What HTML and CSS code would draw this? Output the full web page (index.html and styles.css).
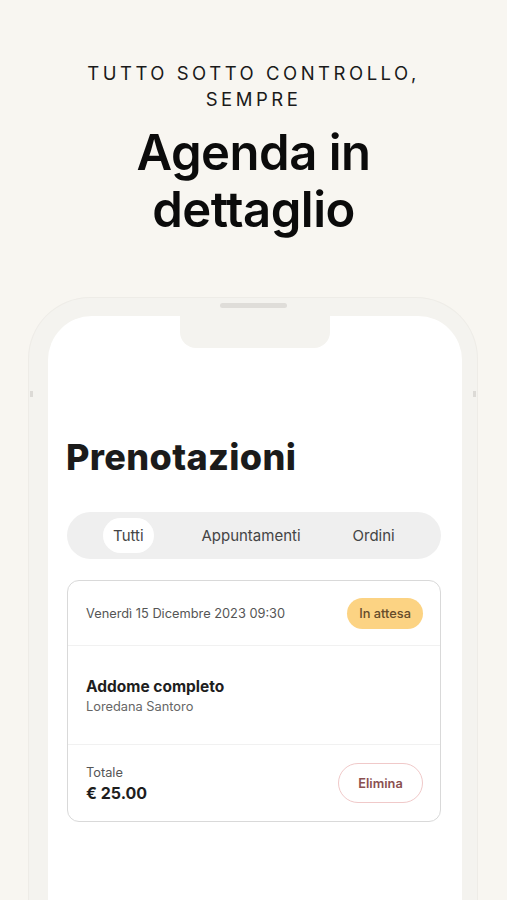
FILE: index.html
```html
<!doctype html>
<html lang="it">
<head>
  <meta charset="UTF-8">
  <meta name="viewport" content="width=device-width, initial-scale=1.0">
  <title>Agenda in dettaglio</title>
  <link rel="stylesheet" href="styles.css">
</head>
<body>
  <div class="intro">
    <p class="kicker">Tutto sotto controllo,<br>sempre</p>
    <h1 class="headline">Agenda in<br>dettaglio</h1>
  </div>

  <div class="phone">
    <span class="speaker"></span>
    <span class="notch"></span>
    <span class="side side-left"></span>
    <span class="side side-right"></span>
    <div class="screen">
      <h2 class="page-title">Prenotazioni</h2>

      <div class="tabs">
        <div class="tab"><span class="tab-label active">Tutti</span></div>
        <div class="tab"><span class="tab-label">Appuntamenti</span></div>
        <div class="tab"><span class="tab-label">Ordini</span></div>
      </div>

      <div class="card">
        <div class="card-row card-head">
          <span class="date">Venerdì 15 Dicembre 2023 09:30</span>
          <span class="badge">In attesa</span>
        </div>
        <div class="card-row card-body">
          <div class="service">Addome completo</div>
          <div class="client">Loredana Santoro</div>
        </div>
        <div class="card-row card-foot">
          <div>
            <div class="total-label">Totale</div>
            <div class="total">€ 25.00</div>
          </div>
          <button class="btn-delete">Elimina</button>
        </div>
      </div>
    </div>
  </div>
</body>
</html>
```

FILE: styles.css
```css
html, body{
  margin:0;
  padding:0;
}
body {
  background: #f8f6f1;
  font-family: Inter, "Noto Sans", sans-serif;
  color: #111;
  height: 900px;
  overflow: hidden;
}
.intro {
  text-align: center;
  padding-top: 60px;
}
.kicker {
  margin: 0;
  font-size: 18.5px;
  line-height: 26px;
  letter-spacing: 0.19em;
  text-transform: uppercase;
  font-weight: 400;
  color: #1a1a1a;
}
.headline {
  margin: 12px 0 0;
  font-size: 49px;
  line-height: 57px;
  font-weight: 600;
  letter-spacing: -0.01em;
  color: #0b0b0b;
}

/* phone mockup */
.phone {
  position: relative;
  width: 414px;
  margin: 59px 0 0 28px;
  padding: 19px 16px 0 20px;
  height: 700px;
  background: #f4f3ef;
  border-radius: 62px 62px 0 0;
  box-shadow: inset 0 0 0 1px #eeece7;
}
.speaker {
  position: absolute;
  top: 6px;
  left: 192px;
  width: 67px;
  height: 5px;
  border-radius: 3px;
  background: #dfddd9;
}
.notch {
  position: absolute;
  top: 19px;
  left: 152px;
  width: 150px;
  height: 32px;
  background: #f4f3ef;
  border-radius: 0 0 16px 16px;
  z-index: 2;
}
.side {
  position: absolute;
  top: 94px;
  width: 3px;
  height: 6px;
  background: #dcdad6;
}
.side-left { left: 2px; }
.side-right { right: 2px; }

.screen {
  background: #fff;
  border-radius: 44px 44px 0 0;
  height: 100%;
  padding: 120px 21px 0 19px;
  box-sizing: border-box;
}
.page-title {
  margin: 0 0 0 -1px;
  font-size: 36px;
  line-height: 42px;
  font-weight: 800;
  color: #1b1b1b;
  letter-spacing: 0.01em;
}

.tabs {
  margin-top: 34px;
  height: 47px;
  display: grid;
  grid-template-columns: repeat(3, 1fr);
  align-items: center;
  padding: 0 6px 0 0;
  background: #efefef;
  border-radius: 24px;
}
.tab {
  text-align: center;
}
.tab-label {
  display: inline-block;
  font-size: 15px;
  line-height: 35px;
  color: #444;
}
.tab-label.active {
  background: #fff;
  padding: 0 10px;
  border-radius: 18px;
}

.card {
  margin-top: 21px;
  border: 1px solid #d9d9d9;
  border-radius: 12px;
  background: #fff;
}
.card-row {
  padding: 0 17px 0 18px;
  display: flex;
  align-items: center;
  justify-content: space-between;
}
.card-head {
  height: 64px;
  border-bottom: 1px solid #f1f1f1;
}
.date {
  font-size: 12.8px;
  color: #555;
}
.badge {
  background: #fcd383;
  color: #654c2a;
  font-size: 12.8px;
  font-weight: 500;
  line-height: 31px;
  padding: 0 12px;
  border-radius: 16px;
}
.card-body {
  height: 98px;
  border-bottom: 1px solid #f1f1f1;
  flex-direction: column;
  align-items: flex-start;
  justify-content: center;
}
.service {
  font-size: 15.5px;
  font-weight: 700;
  color: #1e1e1e;
  line-height: 20px;
  margin-top: 3px;
}
.client {
  font-size: 12.8px;
  color: #666;
  line-height: 20px;
}
.card-foot {
  height: 76px;
}
.total-label {
  font-size: 12.8px;
  color: #555;
  line-height: 19px;
}
.total {
  font-size: 16px;
  font-weight: 700;
  color: #1e1e1e;
  line-height: 22px;
}
.btn-delete {
  font-family: inherit;
  background: #fff;
  border: 1px solid #f0c9c9;
  color: #8a5050;
  font-size: 12.8px;
  font-weight: 600;
  height: 40px;
  width: 85px;
  border-radius: 20px;
}
```
